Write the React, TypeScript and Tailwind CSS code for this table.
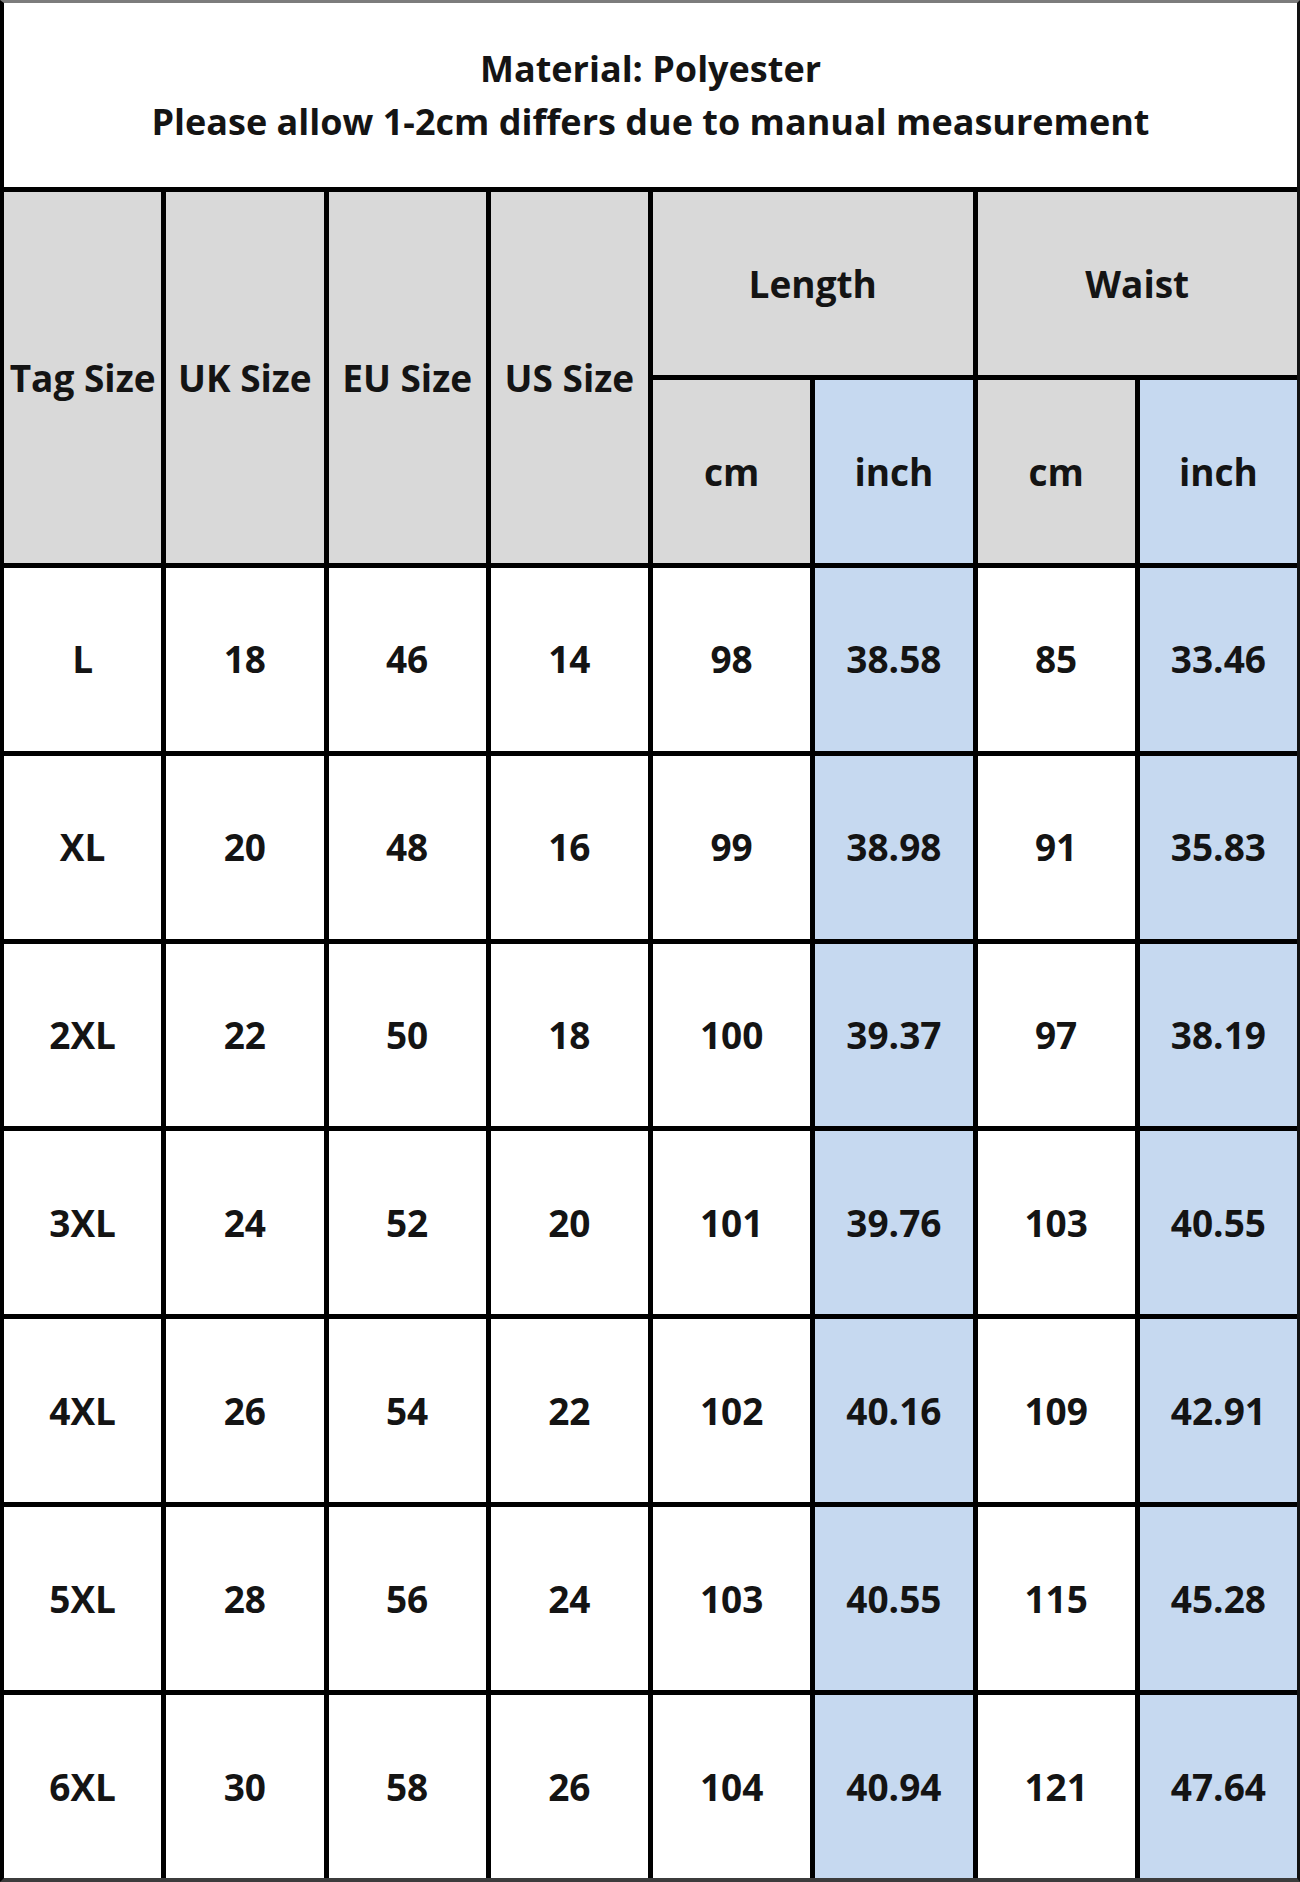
import React from "react";

const rows = [
  ["L", "18", "46", "14", "98", "38.58", "85", "33.46"],
  ["XL", "20", "48", "16", "99", "38.98", "91", "35.83"],
  ["2XL", "22", "50", "18", "100", "39.37", "97", "38.19"],
  ["3XL", "24", "52", "20", "101", "39.76", "103", "40.55"],
  ["4XL", "26", "54", "22", "102", "40.16", "109", "42.91"],
  ["5XL", "28", "56", "24", "103", "40.55", "115", "45.28"],
  ["6XL", "30", "58", "26", "104", "40.94", "121", "47.64"],
];

const cell = "flex items-center justify-center text-[37px] font-bold text-[#141414]";
const gray = "bg-[#d9d9d9]";
const blue = "bg-[#c6d9f0]";

export default function App() {
  return (
    <div
      className="w-[1300px] h-[1882px] flex flex-col bg-white border-l-[4px] border-l-black border-t-[3px] border-t-[#7c7c7c] border-r-[3px] border-r-[#111] border-b-[4px] border-b-[#3c3c3c]"
      style={{ fontFamily: '"Open Sans", "Noto Sans", sans-serif' }}
    >
      <div className="h-[184px] shrink-0 flex flex-col items-center justify-center bg-white text-[#141414] font-bold text-[36px] leading-[53px]">
        <div>Material: Polyester</div>
        <div>Please allow 1-2cm differs due to manual measurement</div>
      </div>
      <div className="h-[5px] shrink-0 bg-black" />
      <div className="flex-1 grid grid-cols-8 grid-rows-9 gap-[5px] bg-black">
        <div className={`${cell} ${gray} row-span-2`}>Tag Size</div>
        <div className={`${cell} ${gray} row-span-2`}>UK Size</div>
        <div className={`${cell} ${gray} row-span-2`}>EU Size</div>
        <div className={`${cell} ${gray} row-span-2`}>US Size</div>
        <div className={`${cell} ${gray} col-span-2`}>Length</div>
        <div className={`${cell} ${gray} col-span-2`}>Waist</div>
        <div className={`${cell} ${gray}`}>cm</div>
        <div className={`${cell} ${blue}`}>inch</div>
        <div className={`${cell} ${gray}`}>cm</div>
        <div className={`${cell} ${blue}`}>inch</div>
        {rows.map((r, i) =>
          r.map((v, j) => (
            <div
              key={`${i}-${j}`}
              className={`${cell} ${j === 5 || j === 7 ? blue : "bg-white"}`}
            >
              {v}
            </div>
          ))
        )}
      </div>
    </div>
  );
}
